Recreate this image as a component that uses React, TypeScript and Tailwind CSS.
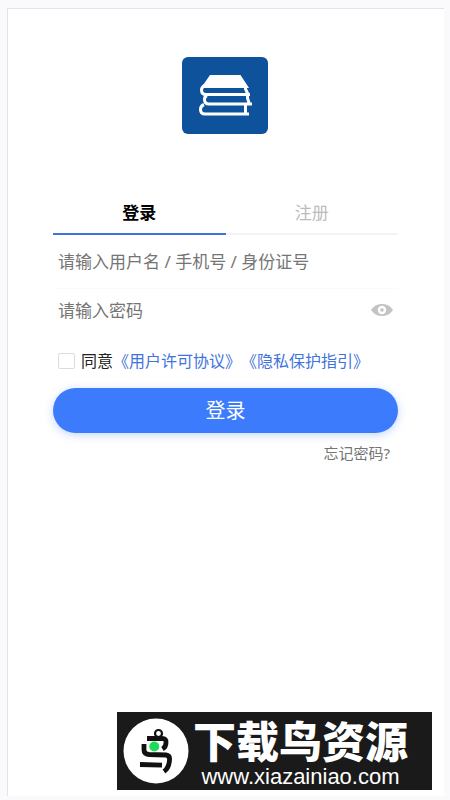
import React, { useState } from 'react';

const tabs = [
    { id: 'login', name: '登录' },
    { id: 'register', name: '注册' },
];

const agreements = ['《用户许可协议》', '《隐私保护指引》'];

const BooksLogo = () => (
    <svg viewBox="0 0 86 77" className="w-[86px] h-[77px]" role="img" aria-label="图书">
        <rect width="86" height="77" rx="6" fill="#0d529a" />
        <path d="M28 18H58.500L67 31H19Z" fill="#fff" />
        <g fill="none" stroke="#fff" strokeWidth="3">
            <path d="M23 28.500Q19.500 30 19.500 33Q19.500 37.500 24 37.500H68" />
            <path d="M63.500 29V32L66.500 38.500" />
            <path d="M25 38.500Q22.500 39.500 22.500 42.500Q22.500 47 27 47H70" />
            <path d="M65.500 38V41L67.500 47.500" />
            <path d="M22 47.500Q18.500 49 18.500 52.500Q18.500 57 23 57H67" />
            <path d="M63.500 47V57" />
        </g>
    </svg>
);

const EyeIcon = () => (
    <svg viewBox="0 0 22 14" className="w-[22px] h-3.5" aria-hidden="true">
        <path d="M0 7C3 2.500 7 1 11 1S19 2.500 22 7C19 11.500 15 13 11 13S3 11.500 0 7Z" fill="#c4c4c4" />
        <circle cx="11" cy="7" r="3" fill="#c4c4c4" stroke="#fff" strokeWidth="2.4" />
    </svg>
);

const BirdLogo = () => (
    <svg viewBox="0 0 66 66" className="w-[66px] h-[66px] shrink-0" aria-hidden="true">
        <circle cx="33" cy="33" r="32.500" fill="#fff" />
        <g fill="none" stroke="#111" strokeWidth="4.800">
            <circle cx="35.500" cy="15.500" r="3.500" strokeWidth="2.200" />
            <path d="M24 20.500H39Q43.500 20.500 43 24.500Q43 29 39.500 31" />
            <path d="M21 26V32Q21 36 26 36.500L43 37Q47 37.500 46.500 42Q46 50 41 53.500" />
            <path d="M17 46.500L39 47.200" />
        </g>
        <circle cx="31.300" cy="28.500" r="5" fill="#1fdb5b" />
    </svg>
);

const App = () => {
    const [activeTab, setActiveTab] = useState('login');
    const [showPassword, setShowPassword] = useState(false);

    return (
        <div className="min-h-screen flex flex-col bg-[#fafafc] pt-2 pb-1 pl-[7px] pr-1.5 font-['Noto_Sans','Noto_Sans_CJK_SC',sans-serif]">
            <main className="flex-1 flex flex-col bg-white border-t border-l border-[#e4e4e4]">
                <div className="flex justify-center pt-12 pr-0.5">
                    <BooksLogo />
                </div>

                <form className="ml-[45px] mr-[46px] mt-[59px]" onSubmit={(e) => e.preventDefault()}>
                    {/* Tabs */}
                    <div className="flex" role="tablist">
                        {tabs.map((tab) => (
                            <button
                                key={tab.id}
                                type="button"
                                role="tab"
                                aria-selected={activeTab === tab.id}
                                onClick={() => setActiveTab(tab.id)}
                                className={`flex-1 h-[42px] border-b-2 text-[17px] leading-6 ${activeTab === tab.id
                                    ? 'border-[#3f74dc] text-black font-bold'
                                    : 'border-[#f2f3f6] text-[#bcbcbc]'
                                    }`}
                            >
                                {tab.name}
                            </button>
                        ))}
                    </div>

                    {/* Fields */}
                    <div className="h-[54px] flex items-center border-b border-[#fafafa] px-[5px]">
                        <input
                            type="text"
                            aria-label="用户名"
                            placeholder="请输入用户名 / 手机号 / 身份证号"
                            className="w-full h-8 text-[17px] text-[#333333] placeholder:text-[#757575] outline-none"
                        />
                    </div>
                    <div className="h-[42px] flex items-center px-[5px]">
                        <input
                            type={showPassword ? 'text' : 'password'}
                            aria-label="密码"
                            placeholder="请输入密码"
                            className="flex-1 min-w-0 h-8 text-[17px] text-[#333333] placeholder:text-[#757575] outline-none"
                        />
                        <button type="button" aria-label="显示密码" onClick={() => setShowPassword(!showPassword)}>
                            <EyeIcon />
                        </button>
                    </div>

                    {/* Agreement */}
                    <div className="flex items-center h-6 mt-[18px] pl-[5px] text-base whitespace-nowrap">
                        <input
                            id="agree"
                            type="checkbox"
                            className="appearance-none w-[17px] h-4 mr-1.5 shrink-0 rounded-xs border border-[#dcdcdc] checked:bg-[#3c7bfb]"
                        />
                        <label htmlFor="agree" className="text-[#222222]">同意</label>
                        {agreements.map((name) => (
                            <a key={name} href="#" className="text-[#3f74dc]">{name}</a>
                        ))}
                    </div>

                    <button
                        type="submit"
                        className="w-full h-[45px] mt-[15px] rounded-full bg-[#3c7bfb] text-white text-xl shadow-[0_2px_10px_rgba(60,123,251,0.3)]"
                    >
                        登录
                    </button>
                    <div className="flex justify-end mt-2 pr-2">
                        <a href="#" className="text-[15px] leading-6 text-[#757575]">忘记密码?</a>
                    </div>
                </form>

                <footer className="mt-auto self-end mr-3 mb-1.5 w-[315px] h-[78px] flex items-center bg-[#1a1a1a] pl-1.5 text-white">
                    <BirdLogo />
                    <div className="flex-1 flex flex-col items-center gap-1 pt-1 pr-5 whitespace-nowrap">
                        <strong className="font-['Noto_Sans_CJK_SC',sans-serif] text-[43px] leading-[44px] font-black">下载鸟资源</strong>
                        <span className="font-['Liberation_Sans',sans-serif] text-[22px] leading-6">www.xiazainiao.com</span>
                    </div>
                </footer>
            </main>
        </div>
    );
};

export default App;
